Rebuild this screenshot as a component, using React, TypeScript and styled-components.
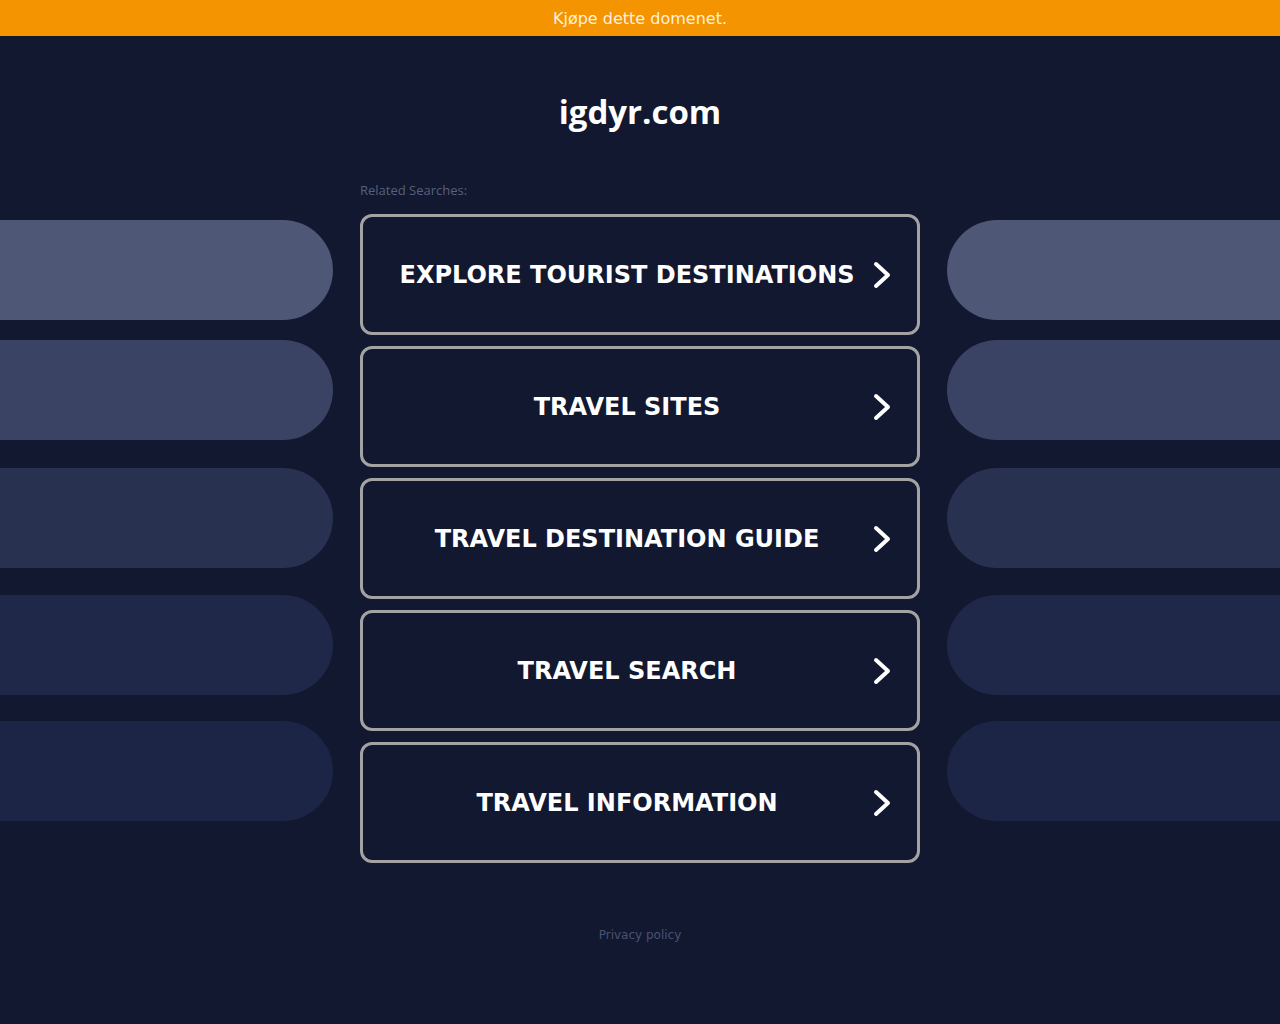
import React from 'react';
import styled, { createGlobalStyle } from 'styled-components';

const GlobalStyle = createGlobalStyle`
  html, body {
    margin: 0;
    padding: 0;
    background-color: #111830;
    font-family: "DejaVu Sans", sans-serif;
  }
`;

const Page = styled.div`
  min-height: 1024px;
  background-color: #111830;
  overflow: hidden;
`;

const BuyBar = styled.div`
  height: 36px;
  padding-top: 1px;
  box-sizing: border-box;
  background-color: #f39400;
  color: #fdf0dc;
  font-family: "DejaVu Sans", sans-serif;
  font-size: 16px;
  display: flex;
  align-items: center;
  justify-content: center;
`;

const Title = styled.h1`
  margin: 0;
  padding-top: 55px;
  height: 96px;
  box-sizing: border-box;
  text-align: center;
  font-family: "Open Sans", sans-serif;
  font-weight: 700;
  font-size: 33px;
  line-height: 42px;
  color: #ffffff;
`;

const Layout = styled.div`
  display: grid;
  grid-template-columns: 1fr 560px 1fr;
  column-gap: 27px;
  margin-top: 50px;
`;

const PillColumn = styled.div`
  display: flex;
  flex-direction: column;
  padding-top: 38px;
`;

const Pill = styled.div<{ $side: 'left' | 'right'; $offset: number; $color: string }>`
  height: 100px;
  margin-top: ${(p) => p.$offset}px;
  background-color: ${(p) => p.$color};
  border-radius: ${(p) => (p.$side === 'left' ? '0 50px 50px 0' : '50px 0 0 50px')};
`;

const Center = styled.div`
  display: flex;
  flex-direction: column;
`;

const Label = styled.div`
  font-family: "Open Sans", sans-serif;
  font-size: 13px;
  line-height: 16px;
  color: #58607a;
  height: 32px;
`;

const List = styled.ul`
  list-style: none;
  margin: 0;
  padding: 0;
  display: flex;
  flex-direction: column;
  gap: 11px;
`;

const SearchLink = styled.a`
  display: flex;
  align-items: center;
  height: 121px;
  box-sizing: border-box;
  padding: 0 24px 0 20px;
  border: 3px solid #a3a3a3;
  border-radius: 12px;
  color: #ffffff;
  text-decoration: none;
  font-family: "DejaVu Sans", sans-serif;
  font-weight: 700;
  font-size: 24px;
`;

const LinkText = styled.span`
  flex: 1;
  text-align: center;
`;

const Chevron = styled.svg`
  width: 22px;
  height: 28px;
  flex-shrink: 0;
`;

const Footer = styled.div`
  margin-top: 65px;
  text-align: center;
  font-size: 12px;
  color: #4a5272;
`;

const searches = [
  'EXPLORE TOURIST DESTINATIONS',
  'TRAVEL SITES',
  'TRAVEL DESTINATION GUIDE',
  'TRAVEL SEARCH',
  'TRAVEL INFORMATION',
];

const pills = [
  { offset: 0, color: '#4e5775' },
  { offset: 20, color: '#3a4363' },
  { offset: 28, color: '#283150' },
  { offset: 27, color: '#1f2848' },
  { offset: 26, color: '#1c2546' },
];

export default function App() {
  return (
    <Page>
      <GlobalStyle />
      <BuyBar>Kjøpe dette domenet.</BuyBar>
      <Title>igdyr.com</Title>
      <Layout>
        <PillColumn>
          {pills.map((p, i) => (
            <Pill key={i} $side="left" $offset={p.offset} $color={p.color} />
          ))}
        </PillColumn>
        <Center>
          <Label>Related Searches:</Label>
          <List>
            {searches.map((s) => (
              <li key={s}>
                <SearchLink href="#">
                  <LinkText>{s}</LinkText>
                  <Chevron viewBox="0 0 22 28">
                    <path d="M5 3 L17 14 L5 25" fill="none" stroke="#ffffff" strokeWidth="4" strokeLinecap="round" strokeLinejoin="round" />
                  </Chevron>
                </SearchLink>
              </li>
            ))}
          </List>
        </Center>
        <PillColumn>
          {pills.map((p, i) => (
            <Pill key={i} $side="right" $offset={p.offset} $color={p.color} />
          ))}
        </PillColumn>
      </Layout>
      <Footer>Privacy policy</Footer>
    </Page>
  );
}
